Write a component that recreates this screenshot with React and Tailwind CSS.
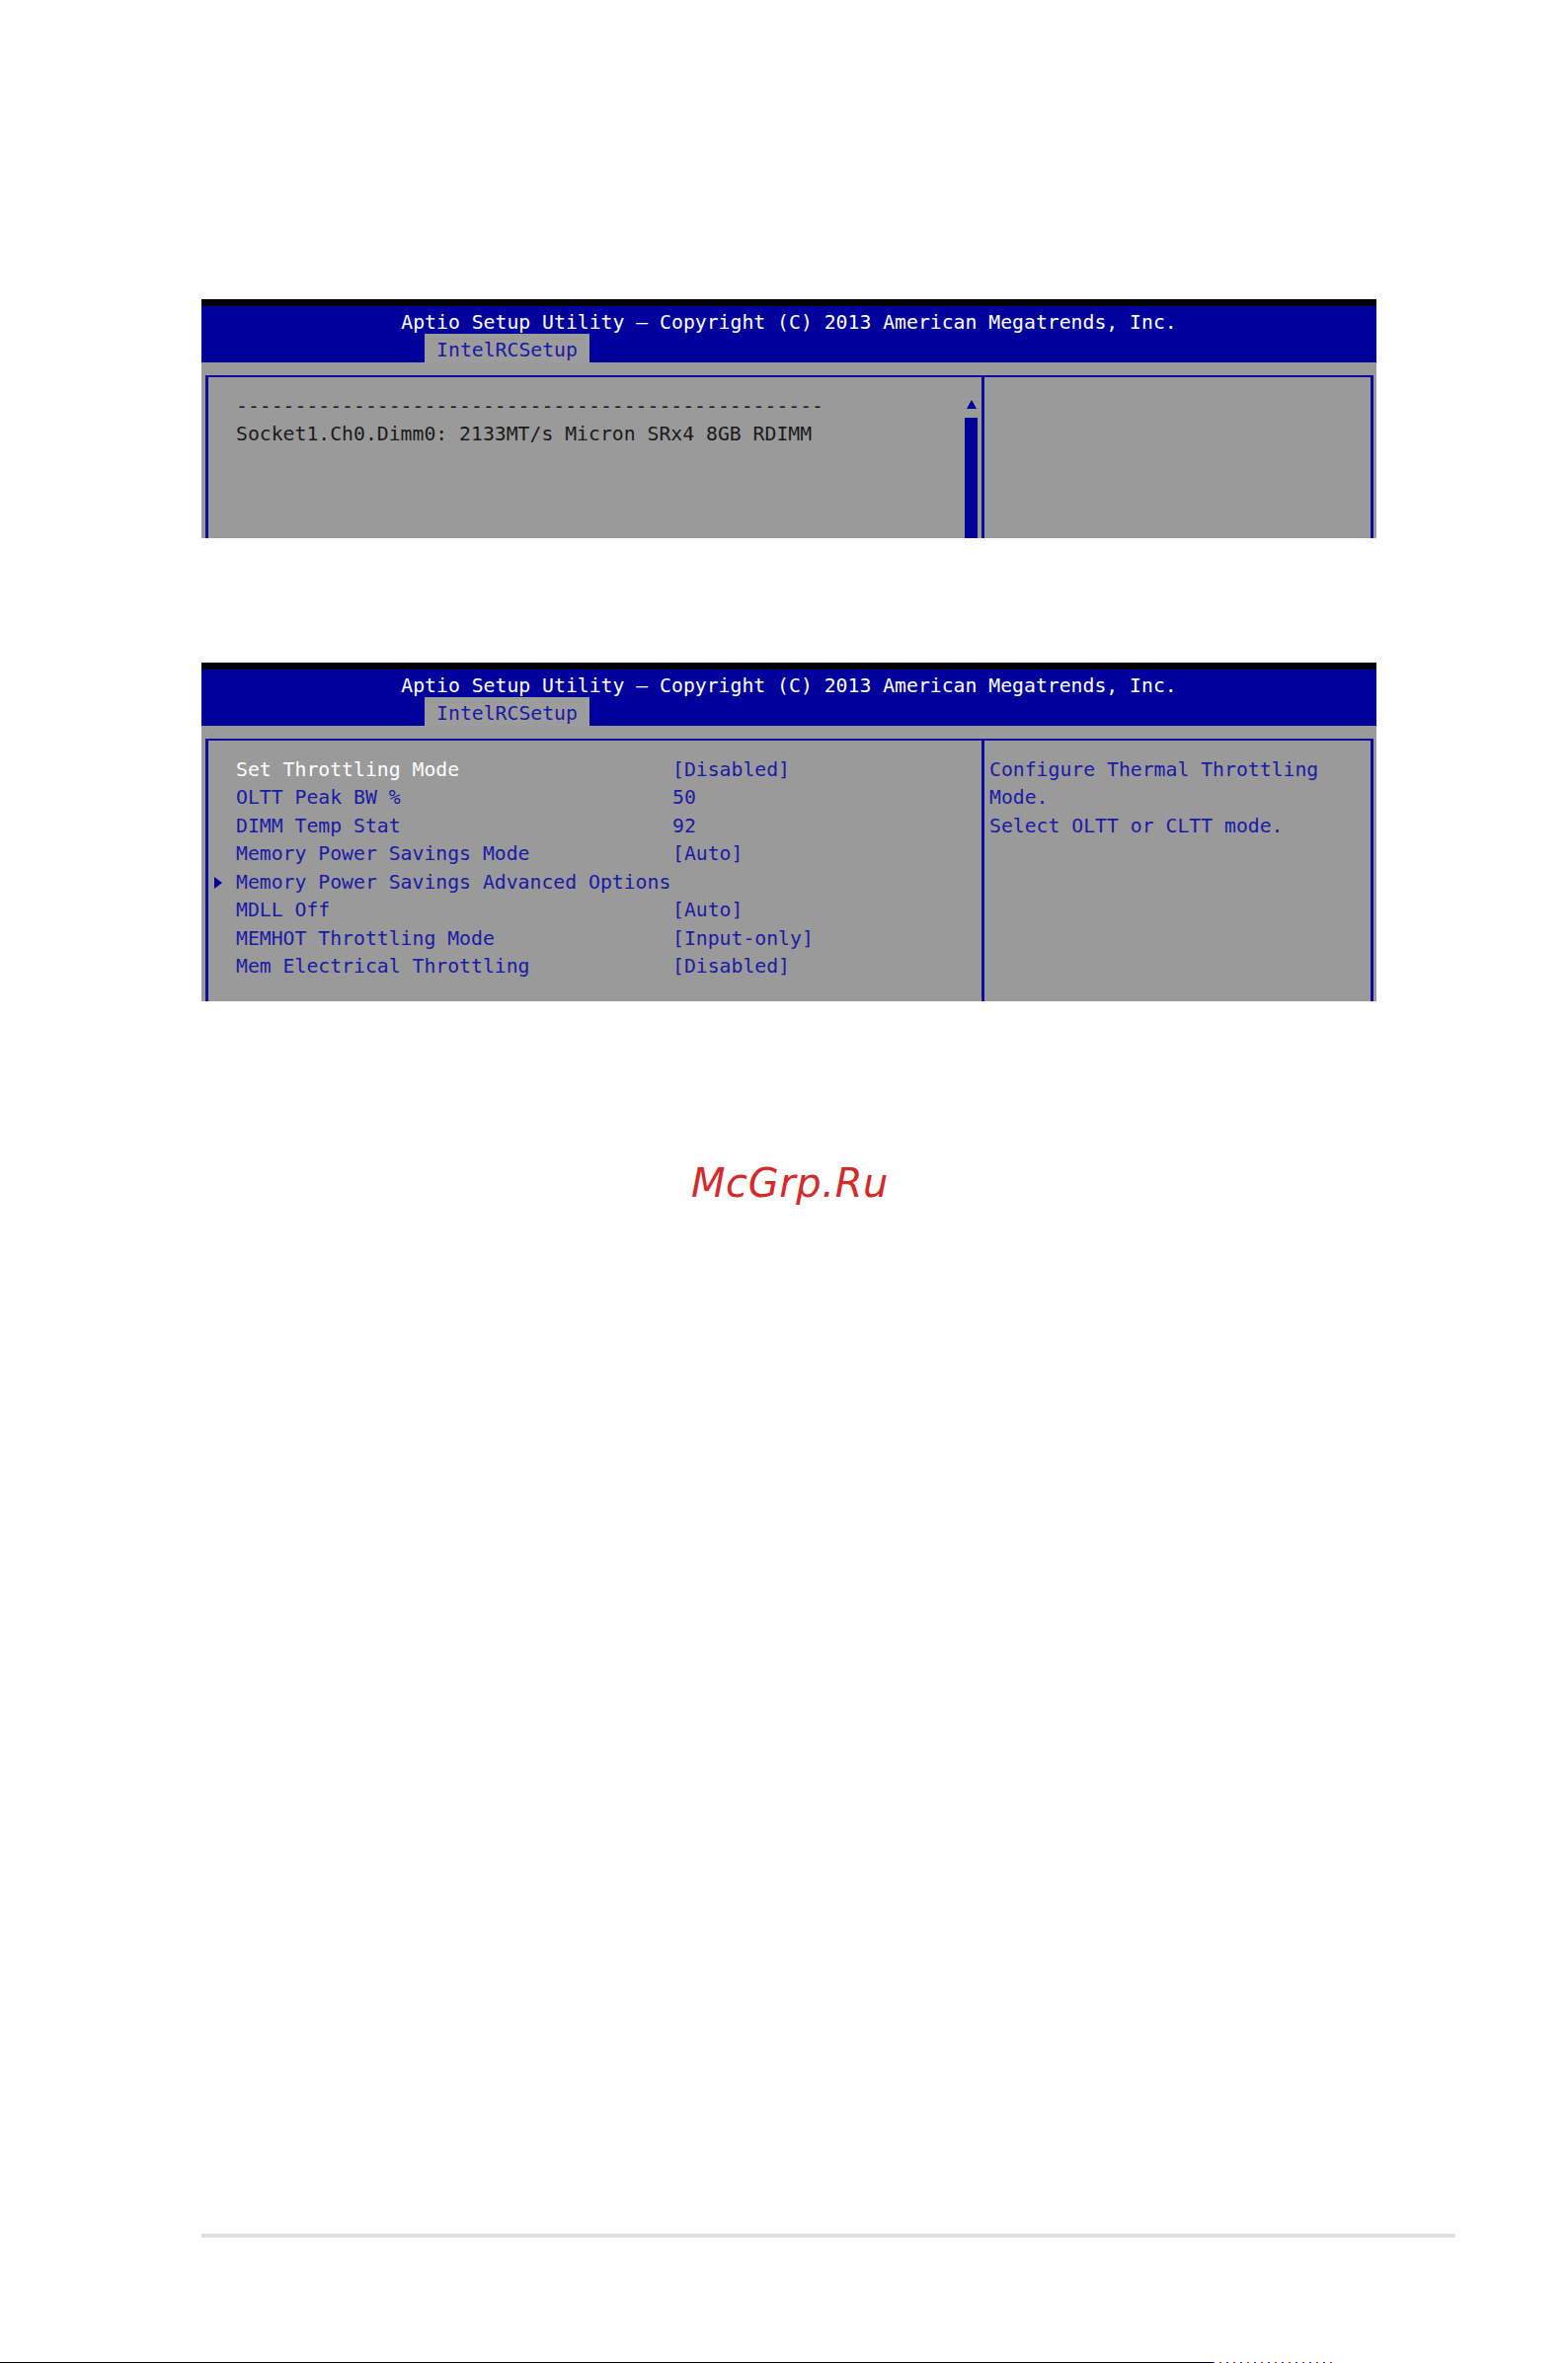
const mono = { fontFamily: '"DejaVu Sans Mono", "Liberation Mono", monospace' }

const rows = [
  { label: 'Set Throttling Mode', value: '[Disabled]', active: true },
  { label: 'OLTT Peak BW %', value: '50' },
  { label: 'DIMM Temp Stat', value: '92' },
  { label: 'Memory Power Savings Mode', value: '[Auto]' },
  { label: 'Memory Power Savings Advanced Options', value: '', submenu: true },
  { label: 'MDLL Off', value: '[Auto]' },
  { label: 'MEMHOT Throttling Mode', value: '[Input-only]' },
  { label: 'Mem Electrical Throttling', value: '[Disabled]' },
]

const help = ['Configure Thermal Throttling', 'Mode.', 'Select OLTT or CLTT mode.']

// Blue title bar with the single tab, shared by both screens
function SetupHeader() {
  return (
    <>
      <div className="h-[7px] bg-black" />
      <div className="h-[57px] bg-[#00009c] flex flex-col">
        <div className="h-[28px] leading-[33px] text-center text-white">
          Aptio Setup Utility – Copyright (C) 2013 American Megatrends, Inc.
        </div>
        <div className="h-[29px] flex">
          <div className="ml-[226px] w-[167px] bg-[#9c9c9c] text-[#1a1aa6] text-center leading-[33px]">
            IntelRCSetup
          </div>
        </div>
      </div>
      <div className="h-[13px]" />
    </>
  )
}

function SetupScreen({ height, children, side, scroll }) {
  return (
    <div
      className="ml-[204px] w-[1190px] bg-[#9a9a9a] overflow-hidden flex flex-col text-[19.77px]"
      style={{ ...mono, height }}
    >
      <SetupHeader />
      <div className="flex-1 flex ml-[4px] mr-[3px] border-t-2 border-x-[3px] border-[#0c0ca0]">
        <div className="w-[786px] border-r-[3px] border-[#0c0ca0] flex">
          <div className="flex-1 pt-[16px] pl-[6px] leading-[28.45px]">{children}</div>
          {scroll && (
            <div className="w-[13px] mr-[4px] pt-[23px] flex flex-col items-center">
              <svg width="10" height="9" viewBox="0 0 10 9">
                <path d="M5 0 L10 9 L0 9 Z" fill="#000098" />
              </svg>
              <div className="mt-[9px] w-[13px] flex-1 bg-[#000098]" />
            </div>
          )}
        </div>
        <div className="flex-1 pt-[16px] pl-[5px] leading-[28.45px] text-[#1a1aa6]">{side}</div>
      </div>
    </div>
  )
}

export default function App() {
  return (
    <div className="w-full min-h-[2393px] bg-white pt-[303px] flex flex-col">
      {/* DIMM info screen */}
      <SetupScreen height={242} scroll>
        <div className="pl-[22px] text-[#1a1a1a] whitespace-pre">
          --------------------------------------------------
        </div>
        <div className="pl-[22px] text-[#1a1a1a] whitespace-pre">
          Socket1.Ch0.Dimm0: 2133MT/s Micron SRx4 8GB RDIMM
        </div>
      </SetupScreen>

      {/* Thermal throttling screen */}
      <div className="mt-[126px]">
        <SetupScreen
          height={343}
          side={help.map((line) => (
            <div key={line} className="whitespace-pre">{line}</div>
          ))}
        >
          {rows.map((row) => (
            <div key={row.label} className="flex items-center whitespace-pre">
              <div className="w-[22px] flex items-center">
                {row.submenu && (
                  <svg width="8" height="12" viewBox="0 0 8 12">
                    <path d="M0 0 L8 6 L0 12 Z" fill="#000098" />
                  </svg>
                )}
              </div>
              <div className={`w-[442px] ${row.active ? 'text-white' : 'text-[#1a1aa6]'}`}>{row.label}</div>
              <div className="text-[#1a1aa6]">{row.value}</div>
            </div>
          ))}
        </SetupScreen>
      </div>

      <div
        className="mt-[164px] h-[40px] leading-none text-center text-[40px] italic tracking-[0.6px] text-[#d42a2a] pl-[12px]"
        style={{ fontFamily: '"DejaVu Sans", sans-serif' }}
      >
        McGrp.Ru
      </div>

      <div className="mt-[1044px] ml-[204px] w-[1270px] h-[4px] bg-[#e0e0e0]" />

      <div className="mt-[126px] h-[1px] flex">
        <div className="w-[1228px] bg-black" />
        <div className="w-[122px] bg-[repeating-linear-gradient(90deg,#2030d0_0_2px,transparent_2px_7px,#d02020_7px_9px,transparent_9px_14px)]" />
      </div>
    </div>
  )
}
